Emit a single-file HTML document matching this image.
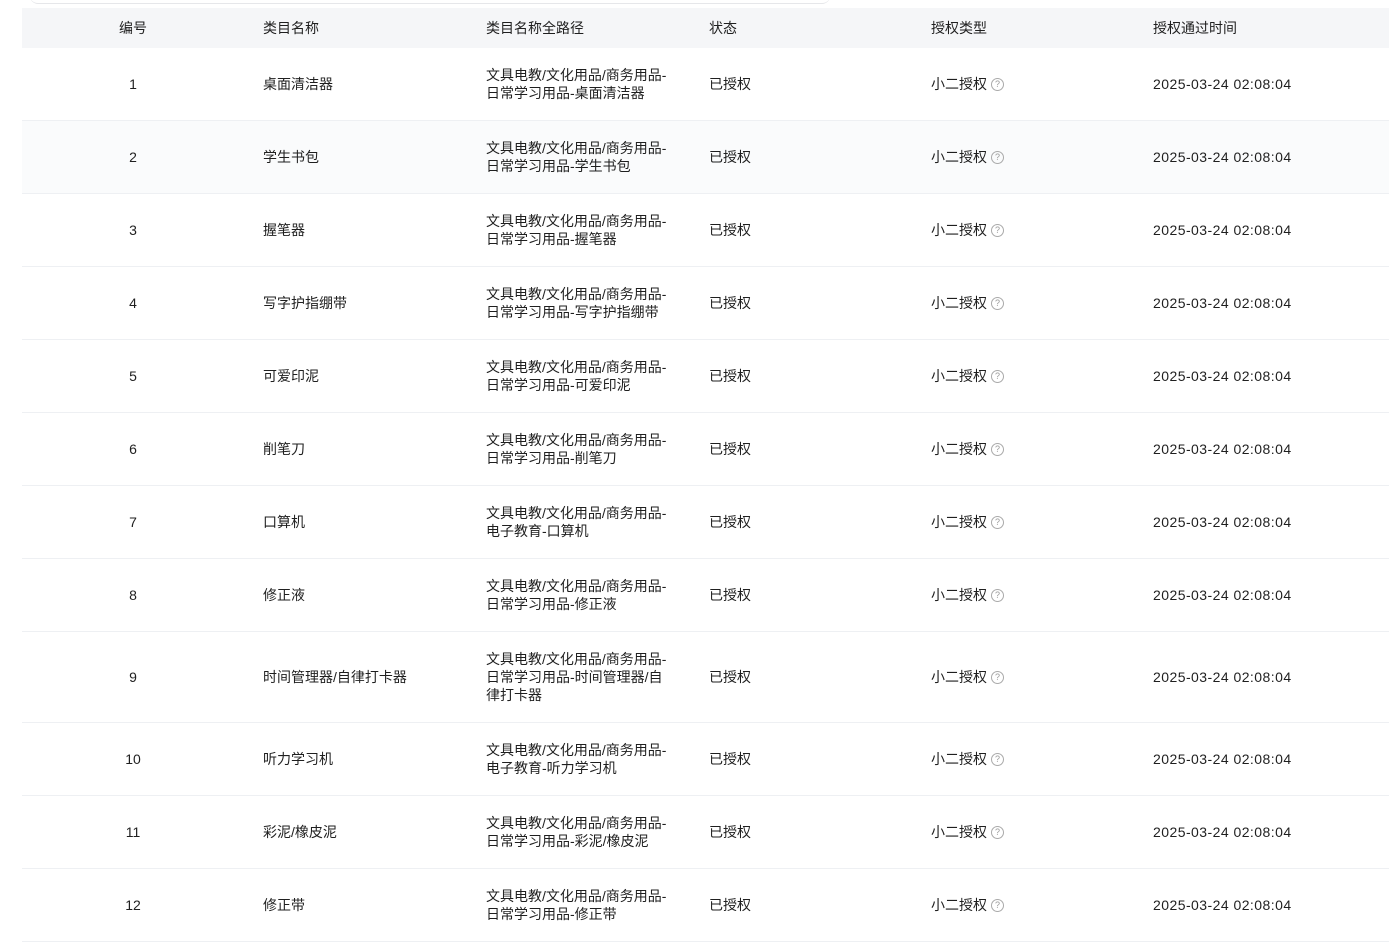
<!DOCTYPE html>
<html><head><meta charset="utf-8"><style>
body{margin:0;width:1389px;height:947px;overflow:hidden;background:#fff;font-family:"Liberation Sans","Noto Sans CJK SC",sans-serif;font-size:14px;color:#1f1f1f}
.top{position:absolute;left:30px;top:-10px;width:800px;height:13px;border-radius:0 0 8px 8px;border-bottom:1px solid #e6e7ea;background:#fff}
.sep{position:absolute;left:22px;top:8px;width:1367px;height:1px;background:#eef0f3}
table{position:absolute;left:22px;top:8px;border-collapse:collapse;table-layout:fixed;width:1380px}
td,th{padding:0 0 0 19px;font-weight:normal;text-align:left;border-bottom:1px solid #eef0f3;line-height:18px;vertical-align:middle}
th{background:#f5f6f8;height:40px;border-bottom:none}
td{height:72px}
td.c,th.c{text-align:center;padding:0}
tr.g td{background:#fafbfc}
.p{width:184px}
tr.t td{height:90px}
td.d{letter-spacing:0.45px}
.q{display:inline-block;box-sizing:border-box;width:13px;height:13px;border:1px solid #aaa;border-radius:50%;font-size:9px;line-height:11px;text-align:center;color:#999;vertical-align:middle;position:relative;top:-1px;margin-left:4px}
</style></head><body>
<div class="top"></div>
<div class="sep"></div>
<table>
<colgroup><col style="width:222px"><col style="width:223px"><col style="width:223px"><col style="width:222px"><col style="width:222px"><col style="width:268px"></colgroup>
<tr><th class="c">编号</th><th>类目名称</th><th>类目名称全路径</th><th>状态</th><th>授权类型</th><th>授权通过时间</th></tr>
<tr><td class="c">1</td><td>桌面清洁器</td><td><div class="p">文具电教/文化用品/商务用品-日常学习用品-桌面清洁器</div></td><td>已授权</td><td>小二授权<span class="q">?</span></td><td class="d">2025-03-24 02:08:04</td></tr>
<tr class="g"><td class="c">2</td><td>学生书包</td><td><div class="p">文具电教/文化用品/商务用品-日常学习用品-学生书包</div></td><td>已授权</td><td>小二授权<span class="q">?</span></td><td class="d">2025-03-24 02:08:04</td></tr>
<tr><td class="c">3</td><td>握笔器</td><td><div class="p">文具电教/文化用品/商务用品-日常学习用品-握笔器</div></td><td>已授权</td><td>小二授权<span class="q">?</span></td><td class="d">2025-03-24 02:08:04</td></tr>
<tr><td class="c">4</td><td>写字护指绷带</td><td><div class="p">文具电教/文化用品/商务用品-日常学习用品-写字护指绷带</div></td><td>已授权</td><td>小二授权<span class="q">?</span></td><td class="d">2025-03-24 02:08:04</td></tr>
<tr><td class="c">5</td><td>可爱印泥</td><td><div class="p">文具电教/文化用品/商务用品-日常学习用品-可爱印泥</div></td><td>已授权</td><td>小二授权<span class="q">?</span></td><td class="d">2025-03-24 02:08:04</td></tr>
<tr><td class="c">6</td><td>削笔刀</td><td><div class="p">文具电教/文化用品/商务用品-日常学习用品-削笔刀</div></td><td>已授权</td><td>小二授权<span class="q">?</span></td><td class="d">2025-03-24 02:08:04</td></tr>
<tr><td class="c">7</td><td>口算机</td><td><div class="p">文具电教/文化用品/商务用品-电子教育-口算机</div></td><td>已授权</td><td>小二授权<span class="q">?</span></td><td class="d">2025-03-24 02:08:04</td></tr>
<tr><td class="c">8</td><td>修正液</td><td><div class="p">文具电教/文化用品/商务用品-日常学习用品-修正液</div></td><td>已授权</td><td>小二授权<span class="q">?</span></td><td class="d">2025-03-24 02:08:04</td></tr>
<tr class="t"><td class="c">9</td><td>时间管理器/自律打卡器</td><td><div class="p">文具电教/文化用品/商务用品-日常学习用品-时间管理器/自律打卡器</div></td><td>已授权</td><td>小二授权<span class="q">?</span></td><td class="d">2025-03-24 02:08:04</td></tr>
<tr><td class="c">10</td><td>听力学习机</td><td><div class="p">文具电教/文化用品/商务用品-电子教育-听力学习机</div></td><td>已授权</td><td>小二授权<span class="q">?</span></td><td class="d">2025-03-24 02:08:04</td></tr>
<tr><td class="c">11</td><td>彩泥/橡皮泥</td><td><div class="p">文具电教/文化用品/商务用品-日常学习用品-彩泥/橡皮泥</div></td><td>已授权</td><td>小二授权<span class="q">?</span></td><td class="d">2025-03-24 02:08:04</td></tr>
<tr><td class="c">12</td><td>修正带</td><td><div class="p">文具电教/文化用品/商务用品-日常学习用品-修正带</div></td><td>已授权</td><td>小二授权<span class="q">?</span></td><td class="d">2025-03-24 02:08:04</td></tr>
</table>
</body></html>
